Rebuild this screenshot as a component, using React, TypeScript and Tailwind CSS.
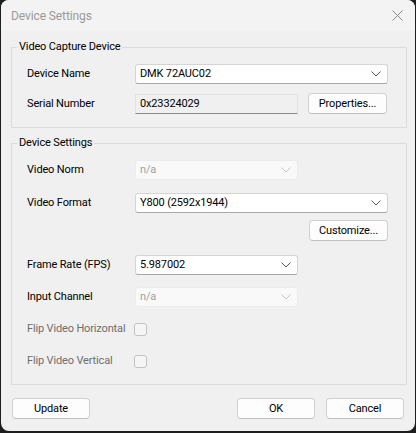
import React from "react";

const font = { fontFamily: 'Roboto, "Liberation Sans", sans-serif' };

function Chevron({ disabled }: { disabled?: boolean }) {
  return (
    <svg width="10" height="6" viewBox="0 0 10 6" className="shrink-0">
      <path
        d="M0.5 0.5 L5 5 L9.5 0.5"
        fill="none"
        stroke={disabled ? "#c4c4c4" : "#5a5a5a"}
        strokeWidth="1"
      />
    </svg>
  );
}

function Combo({
  value,
  width,
  disabled,
}: {
  value: string;
  width: string;
  disabled?: boolean;
}) {
  return (
    <div
      className={
        disabled
          ? `${width} h-[20px] flex items-center justify-between pl-[4px] pr-[6px] rounded-[3px] bg-[#f9f9f9] border border-[#ececec] text-[#a0a0a0]`
          : `${width} h-[20px] flex items-center justify-between pl-[4px] pr-[6px] rounded-[3px] bg-white border border-[#d4d4d4] border-b-[#a8a8a8] text-black`
      }
    >
      <span>{value}</span>
      <Chevron disabled={disabled} />
    </div>
  );
}

function Btn({ label, width }: { label: string; width: string }) {
  return (
    <div
      className={`${width} h-[21px] flex items-center justify-center rounded-[4px] bg-[#fdfdfd] border border-[#d0d0d0] border-b-[#c0c0c0] text-black`}
    >
      {label}
    </div>
  );
}

function Row({
  label,
  dim,
  children,
  className,
}: {
  label: string;
  dim?: boolean;
  children: React.ReactNode;
  className?: string;
}) {
  return (
    <div className={`flex items-center ${className ?? ""}`}>
      <div className={`w-[108px] shrink-0 whitespace-nowrap ${dim ? "text-[#6e6e6e]" : "text-black"}`}>
        {label}
      </div>
      {children}
    </div>
  );
}

function Check() {
  return (
    <div className="-ml-[1px] w-[13px] h-[13px] rounded-[3px] border border-[#c2c2c2] bg-[#f6f6f6]" />
  );
}

export default function App() {
  return (
    <div
      className="w-[416px] h-[433px] bg-[#1e1e1e] text-[11px] leading-[16px] tracking-[-0.15px]"
      style={font}
    >
      <div className="ml-[1px] w-[414px] h-[431px] rounded-[8px] overflow-hidden bg-[#f0f0f0] flex flex-col">
        {/* title bar */}
        <div className="h-[31px] shrink-0 bg-[#f3f3f3] flex items-center justify-between pl-[10px] pr-[12px]">
          <span className="text-[#9a9a9a] text-[12px] tracking-[-0.1px]">Device Settings</span>
          <svg width="11" height="11" viewBox="0 0 11 11">
            <path d="M0.5 0.5 L10.5 10.5 M10.5 0.5 L0.5 10.5" stroke="#8a8a8a" strokeWidth="1" />
          </svg>
        </div>

        <div className="flex flex-col pl-[10px] pr-[8px] pt-[8px]">
          {/* group 1 */}
          <fieldset className="border border-[#dcdcdc] p-0">
            <legend className="ml-[5px] px-[2px] text-black">Video Capture Device</legend>
            <div className="pl-[15px] pt-[9px] pb-[13px]">
              <Row label="Device Name">
                <Combo value="DMK 72AUC02" width="w-[253px]" />
              </Row>
              <Row label="Serial Number" className="mt-[9px]">
                <div className="w-[163px] h-[20px] flex items-center pl-[4px] bg-[#f0f0f0] border border-[#e2e2e2] border-b-[#8c8c8c] text-black">
                  0x23324029
                </div>
                <div className="ml-[10px]">
                  <Btn label="Properties..." width="w-[79px]" />
                </div>
              </Row>
            </div>
          </fieldset>

          {/* group 2 */}
          <fieldset className="mt-[7px] border border-[#dcdcdc] p-0">
            <legend className="ml-[5px] px-[2px] text-black">Device Settings</legend>
            <div className="pl-[15px] pr-[18px] pt-[9px] pb-[13px]">
              <Row label="Video Norm">
                <Combo value="n/a" width="w-[163px]" disabled />
              </Row>
              <Row label="Video Format" className="mt-[13px]">
                <Combo value="Y800 (2592x1944)" width="w-[253px]" />
              </Row>
              <div className="flex justify-end mt-[7px]">
                <Btn label="Customize..." width="w-[79px]" />
              </div>
              <Row label="Frame Rate (FPS)" className="mt-[14px]">
                <Combo value="5.987002" width="w-[163px]" />
              </Row>
              <Row label="Input Channel" className="mt-[12px]">
                <Combo value="n/a" width="w-[163px]" disabled />
              </Row>
              <Row label="Flip Video Horizontal" dim className="mt-[12px] h-[20px]">
                <Check />
              </Row>
              <Row label="Flip Video Vertical" dim className="mt-[12px] h-[20px]">
                <Check />
              </Row>
            </div>
          </fieldset>

          {/* buttons */}
          <div className="flex items-center mt-[13px] pl-[1px] pr-[3px]">
            <Btn label="Update" width="w-[78px]" />
            <div className="flex-1" />
            <Btn label="OK" width="w-[78px]" />
            <div className="ml-[11px]">
              <Btn label="Cancel" width="w-[78px]" />
            </div>
          </div>
        </div>
      </div>
    </div>
  );
}
